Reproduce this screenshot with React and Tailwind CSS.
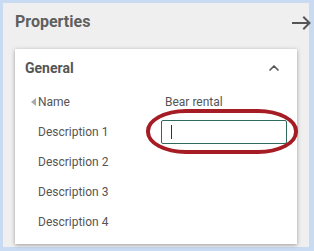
import { ChevronUp } from 'lucide-react';

const rows = ['Description 1', 'Description 2', 'Description 3', 'Description 4'];

export default function App() {
  return (
    <div className="w-[314px] h-[251px] bg-[#c9dbf2] p-[3px] pr-[5px] pb-[4px]" style={{ fontFamily: 'Roboto, "Liberation Sans", sans-serif' }}>
      <div className="relative h-full bg-[#efefef] px-3 pt-[8px] pb-[4px]">
        <div className="flex items-center justify-between h-[22px]">
          <span className="text-[16px] font-bold text-[#5f5f5f]">Properties</span>
          <svg width="19" height="14" viewBox="0 0 19 14" className="-mr-[14px] mt-[1px]" fill="none" stroke="#555" strokeWidth="2" strokeLinecap="square">
            <path d="M1 7h16" />
            <path d="M12 1.5l5.5 5.5-5.5 5.5" />
          </svg>
        </div>
        <div className="mt-[16px] h-[195px] bg-white shadow-[0_1px_4px_rgba(0,0,0,0.35)] px-[10px] pt-[10px]">
          <div className="flex items-center justify-between h-[18px]">
            <span className="text-[14px] font-bold text-[#555]">General</span>
            <ChevronUp className="w-4 h-4 text-[#555] mr-[5px]" strokeWidth={2.5} />
          </div>
          <div className="mt-[10px]">
            <div className="flex items-center h-[30px]">
              <div className="w-[140px] flex items-center text-[12px] text-[#555]">
                <span className="ml-[6px] w-0 h-0 border-y-[4px] border-y-transparent border-r-[5px] border-r-[#aaa] mr-[2px]"></span>
                Name
              </div>
              <span className="text-[12px] text-[#555]">Bear rental</span>
            </div>
            {rows.map((r, i) => (
              <div key={r} className="flex items-center h-[30px]">
                <div className="w-[140px] pl-[13px] text-[12px] text-[#555]">{r}</div>
                {i === 0 && (
                  <div className="relative">
                    <div className="w-[126px] h-[24px] border border-[#2e6b5e] rounded-[2px] flex items-center pl-[9px]">
                      <span className="w-px h-[14px] bg-[#333]"></span>
                    </div>
                    <div className="absolute -left-[15px] -top-[11px] w-[152px] h-[45px] border-[4px] border-[#a51c24] rounded-[40px/22px]"></div>
                  </div>
                )}
              </div>
            ))}
          </div>
        </div>
      </div>
    </div>
  );
}
